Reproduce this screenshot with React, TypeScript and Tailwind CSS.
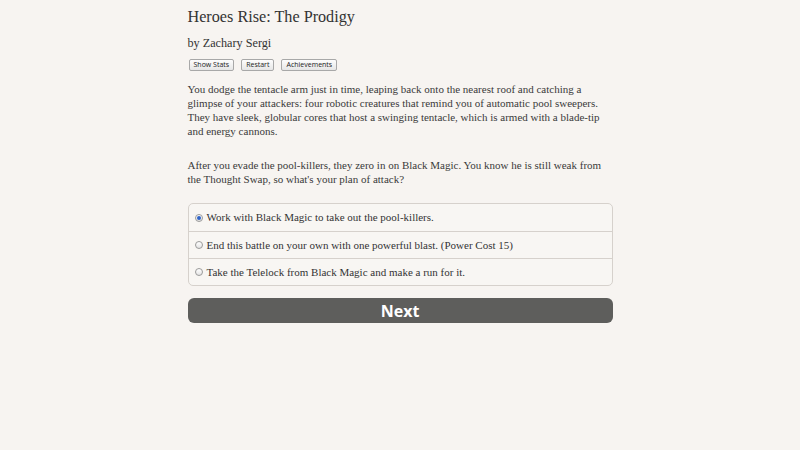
import React from "react";

const serif = { fontFamily: '"Liberation Serif", "Times New Roman", serif' };

function Radio({ checked }: { checked?: boolean }) {
  return (
    <span className="relative inline-flex h-[8px] w-[8px] shrink-0 items-center justify-center rounded-full border border-[#9a9a9a] bg-gradient-to-b from-[#ffffff] to-[#e4e4e4]">
      {checked && <span className="h-[4px] w-[4px] rounded-full bg-[#2f64c8]" />}
    </span>
  );
}

function Btn({ children }: { children: React.ReactNode }) {
  return (
    <button className="h-[12px] rounded-[2px] border border-[#a8a8a8] bg-gradient-to-b from-[#fdfdfd] to-[#e6e6e6] px-[4px] text-[7px] leading-[10px] text-[#222]" style={{ fontFamily: '"Open Sans", "DejaVu Sans", sans-serif' }}>
      {children}
    </button>
  );
}

export default function App() {
  const options = [
    "Work with Black Magic to take out the pool-killers.",
    "End this battle on your own with one powerful blast. (Power Cost 15)",
    "Take the Telelock from Black Magic and make a run for it.",
  ];
  return (
    <div className="min-h-[450px] w-full bg-[#f7f4f1] text-[#333]" style={serif}>
      <div className="mx-auto w-[425px] pt-[7px]">
        <h1 className="text-[16.2px] leading-[20px] text-[#333]">Heroes Rise: The Prodigy</h1>
        <div className="mt-[9px] text-[12.2px] leading-[14px]">by Zachary Sergi</div>
        <div className="mt-[9px] flex gap-[7px] pl-[1px]">
          <Btn>Show Stats</Btn>
          <Btn>Restart</Btn>
          <Btn>Achievements</Btn>
        </div>
        <div className="mt-[11px] whitespace-nowrap text-[11px] leading-[14px] text-[#3a3a3a]">
          <p>
            You dodge the tentacle arm just in time, leaping back onto the nearest roof and catching a<br />
            glimpse of your attackers: four robotic creatures that remind you of automatic pool sweepers.<br />
            They have sleek, globular cores that host a swinging tentacle, which is armed with a blade-tip<br />
            and energy cannons.
          </p>
          <p className="mt-[20px]">
            After you evade the pool-killers, they zero in on Black Magic. You know he is still weak from<br />
            the Thought Swap, so what's your plan of attack?
          </p>
        </div>
        <div className="mt-[17px] overflow-hidden rounded-[5px] border border-[#d6d1cc] bg-[#f8f6f3]">
          {options.map((o, i) => (
            <div key={i} className={`flex h-[27px] items-center gap-[4px] pl-[6px] text-[11px] text-[#333] ${i > 0 ? "border-t border-[#d6d1cc]" : ""}`}>
              <Radio checked={i === 0} />
              <span>{o}</span>
            </div>
          ))}
        </div>
        <button className="mt-[12px] flex h-[25px] w-full items-center justify-center rounded-[6px] bg-[#5e5e5c] text-[16px] font-bold text-white" style={{ fontFamily: '"Open Sans", sans-serif' }}>
          Next
        </button>
      </div>
    </div>
  );
}
